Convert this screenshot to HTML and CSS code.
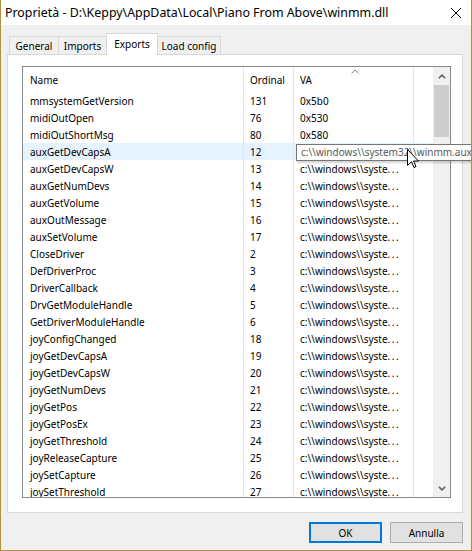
FILE: index.html
```html
<!DOCTYPE html>
<html>
<head>
<meta charset="utf-8">
<link rel="stylesheet" href="styles.css">
</head>
<body>
<div class="window">
  <div class="titlebar">
    <span class="title">Proprietà - D:\Keppy\AppData\Local\Piano From Above\winmm.dll</span>
    <svg class="close" width="10" height="10" viewBox="0 0 10 10"><path d="M0 0 L10 10 M10 0 L0 10" stroke="#000" stroke-width="1" fill="none"/></svg>
  </div>
  <div class="content">
    <div class="tabs">
      <div class="tab t-general">General</div>
      <div class="tab t-imports">Imports</div>
      <div class="tab t-exports active">Exports</div>
      <div class="tab t-load">Load config</div>
    </div>
    <div class="panel">
      <div class="listview">
        <div class="list">
          <div class="row header">
            <div class="c name">Name</div>
            <div class="c ord">Ordinal</div>
            <div class="c va">VA<svg class="sort" width="8" height="5" viewBox="0 0 8 5"><path d="M0.5 4.5 L4 1 L7.5 4.5" stroke="#8a8a8a" stroke-width="1" fill="none"/></svg></div>
            <div class="c fill"></div>
          </div>
          <div class="row"><div class="c name">mmsystemGetVersion</div><div class="c ord">131</div><div class="c va">0x5b0</div><div class="c fill"></div></div>
          <div class="row"><div class="c name">midiOutOpen</div><div class="c ord">76</div><div class="c va">0x530</div><div class="c fill"></div></div>
          <div class="row"><div class="c name">midiOutShortMsg</div><div class="c ord">80</div><div class="c va">0x580</div><div class="c fill"></div></div>
          <div class="row hl"><div class="c name">auxGetDevCapsA</div><div class="c ord">12</div><div class="c va">c:\\windows\\syste<span class="dots">...</span></div><div class="c fill"></div></div>
          <div class="row"><div class="c name">auxGetDevCapsW</div><div class="c ord">13</div><div class="c va">c:\\windows\\syste<span class="dots">...</span></div><div class="c fill"></div></div>
          <div class="row"><div class="c name">auxGetNumDevs</div><div class="c ord">14</div><div class="c va">c:\\windows\\syste<span class="dots">...</span></div><div class="c fill"></div></div>
          <div class="row"><div class="c name">auxGetVolume</div><div class="c ord">15</div><div class="c va">c:\\windows\\syste<span class="dots">...</span></div><div class="c fill"></div></div>
          <div class="row"><div class="c name">auxOutMessage</div><div class="c ord">16</div><div class="c va">c:\\windows\\syste<span class="dots">...</span></div><div class="c fill"></div></div>
          <div class="row"><div class="c name">auxSetVolume</div><div class="c ord">17</div><div class="c va">c:\\windows\\syste<span class="dots">...</span></div><div class="c fill"></div></div>
          <div class="row"><div class="c name">CloseDriver</div><div class="c ord">2</div><div class="c va">c:\\windows\\syste<span class="dots">...</span></div><div class="c fill"></div></div>
          <div class="row"><div class="c name">DefDriverProc</div><div class="c ord">3</div><div class="c va">c:\\windows\\syste<span class="dots">...</span></div><div class="c fill"></div></div>
          <div class="row"><div class="c name">DriverCallback</div><div class="c ord">4</div><div class="c va">c:\\windows\\syste<span class="dots">...</span></div><div class="c fill"></div></div>
          <div class="row"><div class="c name">DrvGetModuleHandle</div><div class="c ord">5</div><div class="c va">c:\\windows\\syste<span class="dots">...</span></div><div class="c fill"></div></div>
          <div class="row"><div class="c name">GetDriverModuleHandle</div><div class="c ord">6</div><div class="c va">c:\\windows\\syste<span class="dots">...</span></div><div class="c fill"></div></div>
          <div class="row"><div class="c name">joyConfigChanged</div><div class="c ord">18</div><div class="c va">c:\\windows\\syste<span class="dots">...</span></div><div class="c fill"></div></div>
          <div class="row"><div class="c name">joyGetDevCapsA</div><div class="c ord">19</div><div class="c va">c:\\windows\\syste<span class="dots">...</span></div><div class="c fill"></div></div>
          <div class="row"><div class="c name">joyGetDevCapsW</div><div class="c ord">20</div><div class="c va">c:\\windows\\syste<span class="dots">...</span></div><div class="c fill"></div></div>
          <div class="row"><div class="c name">joyGetNumDevs</div><div class="c ord">21</div><div class="c va">c:\\windows\\syste<span class="dots">...</span></div><div class="c fill"></div></div>
          <div class="row"><div class="c name">joyGetPos</div><div class="c ord">22</div><div class="c va">c:\\windows\\syste<span class="dots">...</span></div><div class="c fill"></div></div>
          <div class="row"><div class="c name">joyGetPosEx</div><div class="c ord">23</div><div class="c va">c:\\windows\\syste<span class="dots">...</span></div><div class="c fill"></div></div>
          <div class="row"><div class="c name">joyGetThreshold</div><div class="c ord">24</div><div class="c va">c:\\windows\\syste<span class="dots">...</span></div><div class="c fill"></div></div>
          <div class="row"><div class="c name">joyReleaseCapture</div><div class="c ord">25</div><div class="c va">c:\\windows\\syste<span class="dots">...</span></div><div class="c fill"></div></div>
          <div class="row"><div class="c name">joySetCapture</div><div class="c ord">26</div><div class="c va">c:\\windows\\syste<span class="dots">...</span></div><div class="c fill"></div></div>
          <div class="row"><div class="c name">joySetThreshold</div><div class="c ord">27</div><div class="c va">c:\\windows\\syste<span class="dots">...</span></div><div class="c fill"></div></div>
        </div>
        <div class="scrollbar">
          <div class="sb-btn"><svg width="8" height="5" viewBox="0 0 8 5"><path d="M0.8 4.3 L4 1.2 L7.2 4.3" stroke="#606060" stroke-width="1.6" fill="none"/></svg></div>
          <div class="sb-track"><div class="sb-thumb"></div></div>
          <div class="sb-btn"><svg width="8" height="5" viewBox="0 0 8 5"><path d="M0.8 0.7 L4 3.8 L7.2 0.7" stroke="#606060" stroke-width="1.6" fill="none"/></svg></div>
        </div>
      </div>
    </div>
    <div class="buttons">
      <div class="btn ok">OK</div>
      <div class="btn">Annulla</div>
    </div>
  </div>
  <div class="tooltip">c:\\windows\\system32\\winmm.aux</div>
  <svg class="cursor" width="12" height="20" viewBox="0 0 12 20"><path d="M0.5 0.5 L0.5 16.5 L4.5 12.8 L7 18.5 L9 17.6 L6.6 12 L11.5 12 Z" fill="#fff" stroke="#000" stroke-width="1" stroke-linejoin="miter"/></svg>
</div>
</body>
</html>
```
FILE: styles.css
```css
* { box-sizing: border-box; }
html, body { margin: 0; padding: 0; }
body {
  width: 472px;
  height: 551px;
  overflow: hidden;
  font-family: "Noto Sans", "Open Sans", sans-serif;
  font-size: 10px;
  color: #000;
  background: #fff;
}
.window {
  position: relative;
  width: 472px;
  height: 551px;
  overflow: hidden;
  background: #f0f0f0;
  border-left: 1px solid #b09140;
  border-right: 1px solid #b09140;
  border-bottom: 1px solid #b09140;
  display: flex;
  flex-direction: column;
}
.titlebar {
  height: 25px;
  background: #fff;
  display: flex;
  align-items: center;
  justify-content: space-between;
  padding: 0 10px 0 4px;
  flex: none;
}
.title { font-size: 12.4px; line-height: 16px; white-space: nowrap; }
.close { display: block; }
.content {
  padding: 8px 8px 0 6px;
  display: flex;
  flex-direction: column;
}
.tabs {
  display: flex;
  align-items: flex-end;
  height: 21px;
  padding-left: 2px;
}
.tab {
  height: 18px;
  border: 1px solid #d9d9d9;
  border-bottom: none;
  background: #f0f0f0;
  display: flex;
  align-items: center;
  justify-content: center;
  line-height: 14px;
  padding-top: 1px;
  white-space: nowrap;
  margin-left: -1px;
}
.t-general { width: 50px; margin-left: 0; }
.t-imports { width: 49px; }
.t-exports { width: 52px; }
.t-load { width: 64px; }
.tab.active {
  position: relative;
  z-index: 2;
  height: 22px;
  margin-bottom: -1px;
  background: #fff;
  padding-top: 0;
  padding-bottom: 2px;
}
.panel {
  width: 456px;
  height: 459px;
  background: #fff;
  border: 1px solid #d9d9d9;
  padding: 11px 0 0 14px;
}
.listview {
  width: 429px;
  height: 432px;
  border: 1px solid #828790;
  display: flex;
  overflow: hidden;
}
.list {
  width: 410px;
  flex: none;
  overflow: hidden;
}
.row {
  display: flex;
  height: 17px;
  line-height: 17px;
  white-space: nowrap;
}
.row .c { padding-top: 1px; }
.row.header { height: 25px; line-height: 25px; }
.row.hl { background: #e5f3ff; }
.c { border-right: 1px solid #e5e5e5; overflow: hidden; flex: none; }
.name { width: 221px; padding-left: 7px; }
.ord { width: 50px; padding-left: 6px; }
.va { width: 120px; padding-left: 6px; position: relative; }
.fill { width: 19px; border-right: none; }
.dots { letter-spacing: 1.5px; }
.sort { position: absolute; left: 57px; top: 2px; }
.scrollbar {
  width: 17px;
  flex: none;
  background: #f0f0f0;
  display: flex;
  flex-direction: column;
}
.sb-btn {
  height: 18px;
  flex: none;
  display: flex;
  align-items: center;
  justify-content: center;
}
.sb-track { flex: 1; padding: 0 1px; }
.sb-thumb { height: 52px; background: #cdcdcd; }
.buttons {
  display: flex;
  justify-content: flex-end;
  gap: 8px;
  margin-top: 9px;
}
.btn {
  width: 73px;
  height: 21px;
  background: #e1e1e1;
  border: 1px solid #adadad;
  display: flex;
  align-items: center;
  justify-content: center;
  line-height: 14px;
}
.btn.ok { border: 2px solid #0078d7; }
.tooltip {
  position: absolute;
  left: 295px;
  top: 144px;
  width: 220px;
  height: 17px;
  background: #fff;
  border: 1px solid #767676;
  color: #575757;
  padding-left: 4px;
  line-height: 15px;
  white-space: nowrap;
  box-shadow: 1px 2px 2px rgba(0,0,0,0.18);
}
.cursor {
  position: absolute;
  left: 406px;
  top: 149px;
}
```
